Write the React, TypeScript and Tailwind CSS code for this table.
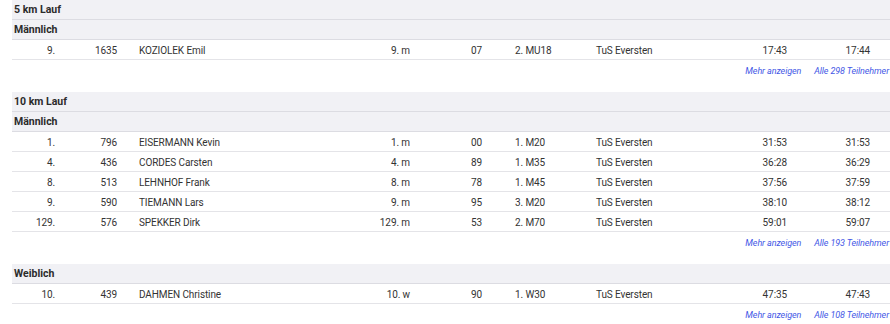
import React from "react";

type Row = {
  rank: string;
  bib: string;
  name: string;
  cat: string;
  year: string;
  ak: string;
  club: string;
  t1: string;
  t2: string;
};

const font = { fontFamily: "Roboto, 'Liberation Sans', sans-serif" };

function Band({ children }: { children: React.ReactNode }) {
  return (
    <div className="h-[20px] bg-[#f1f1f5] border-b border-[#dcdce2] flex items-center pl-[2px] pt-[1px] font-bold text-[10.5px] text-[#2b2b2b]">
      {children}
    </div>
  );
}

function DataRow({ r }: { r: Row }) {
  return (
    <div className="h-[20px] pt-[2px] border-b border-[#e4e4e8] grid grid-cols-[48px_62px_208px_85px_72px_109px_104px_92px_83px_1fr] items-center text-[10px] tracking-[-0.1px] text-[#333]">
      <div className="text-right pr-[5px]">{r.rank}</div>
      <div className="text-right pr-[5px]">{r.bib}</div>
      <div className="pl-[17px]">{r.name}</div>
      <div className="text-right pr-[5px]">{r.cat}</div>
      <div className="text-right pr-[5px]">{r.year}</div>
      <div className="pl-[28px]">{r.ak}</div>
      <div>{r.club}</div>
      <div className="text-right pr-[5px]">{r.t1}</div>
      <div className="text-right pr-[5px]">{r.t2}</div>
      <div />
    </div>
  );
}

function Links({ n }: { n: string }) {
  return (
    <div className="h-[24px] flex items-center justify-end gap-[13px] italic text-[9px] tracking-[-0.1px] text-[#4458e6] mb-[8px] whitespace-nowrap pr-[1px]">
      <span>Mehr anzeigen</span>
      <span>Alle {n} Teilnehmer</span>
    </div>
  );
}

const club = "TuS Eversten";

export default function App() {
  return (
    <div className="w-[890px] h-[324px] bg-white overflow-hidden" style={font}>
      <div className="ml-[12px]">
        <Band>5 km Lauf</Band>
        <Band>Männlich</Band>
        <DataRow r={{ rank: "9.", bib: "1635", name: "KOZIOLEK Emil", cat: "9. m", year: "07", ak: "2. MU18", club, t1: "17:43", t2: "17:44" }} />
        <Links n="298" />

        <Band>10 km Lauf</Band>
        <Band>Männlich</Band>
        <DataRow r={{ rank: "1.", bib: "796", name: "EISERMANN Kevin", cat: "1. m", year: "00", ak: "1. M20", club, t1: "31:53", t2: "31:53" }} />
        <DataRow r={{ rank: "4.", bib: "436", name: "CORDES Carsten", cat: "4. m", year: "89", ak: "1. M35", club, t1: "36:28", t2: "36:29" }} />
        <DataRow r={{ rank: "8.", bib: "513", name: "LEHNHOF Frank", cat: "8. m", year: "78", ak: "1. M45", club, t1: "37:56", t2: "37:59" }} />
        <DataRow r={{ rank: "9.", bib: "590", name: "TIEMANN Lars", cat: "9. m", year: "95", ak: "3. M20", club, t1: "38:10", t2: "38:12" }} />
        <DataRow r={{ rank: "129.", bib: "576", name: "SPEKKER Dirk", cat: "129. m", year: "53", ak: "2. M70", club, t1: "59:01", t2: "59:07" }} />
        <Links n="193" />

        <Band>Weiblich</Band>
        <DataRow r={{ rank: "10.", bib: "439", name: "DAHMEN Christine", cat: "10. w", year: "90", ak: "1. W30", club, t1: "47:35", t2: "47:43" }} />
        <Links n="108" />
      </div>
    </div>
  );
}
